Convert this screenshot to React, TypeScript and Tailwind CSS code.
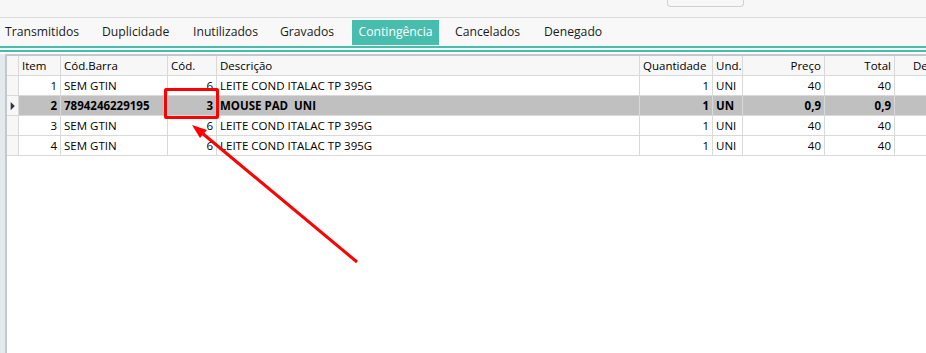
const tabs = [
    { label: 'Transmitidos', w: 'w-[97px]' },
    { label: 'Duplicidade', w: 'w-[91px]' },
    { label: 'Inutilizados', w: 'w-[87px]' },
    { label: 'Gravados', w: 'w-[72px]' },
    { label: 'Contingência', w: 'w-[87px]' },
    { label: 'Cancelados', w: 'w-[89px]' },
    { label: 'Denegado', w: 'w-[80px]' },
];

type Row = {
    item: string;
    barra: string;
    cod: string;
    desc: string;
    qtd: string;
    und: string;
    preco: string;
    total: string;
    selected?: boolean;
};

const rows: Row[] = [
    { item: '1', barra: 'SEM GTIN', cod: '6', desc: 'LEITE COND ITALAC TP 395G', qtd: '1', und: 'UNI', preco: '40', total: '40' },
    { item: '2', barra: '7894246229195', cod: '3', desc: 'MOUSE PAD  UNI', qtd: '1', und: 'UN', preco: '0,9', total: '0,9', selected: true },
    { item: '3', barra: 'SEM GTIN', cod: '6', desc: 'LEITE COND ITALAC TP 395G', qtd: '1', und: 'UNI', preco: '40', total: '40' },
    { item: '4', barra: 'SEM GTIN', cod: '6', desc: 'LEITE COND ITALAC TP 395G', qtd: '1', und: 'UNI', preco: '40', total: '40' },
];

const cols = 'grid grid-cols-[12px_42px_107px_49px_423px_73px_30px_82px_70px_80px]';
const cell = 'h-5 border-r border-b border-[#d9d9d9] px-[3px] leading-[19px] whitespace-pre overflow-hidden';

export default function App() {
    return (
        <div
            className="relative h-[353px] w-[926px] overflow-hidden bg-white text-[11.5px] text-black"
            style={{ fontFamily: '"Open Sans", "Noto Sans", sans-serif' }}
        >
            {/* top toolbar strip */}
            <div className="flex h-[18px] border-b border-[#dcdcdc] bg-[#f7f7f7]">
                <div className="ml-[667px] h-[7px] w-[77px] rounded-b-[4px] border border-t-0 border-[#d0d0d0]" />
            </div>

            {/* tabs */}
            <div className="flex h-[28px] items-center bg-[#f8f8f8] pl-[5px] pt-[1px] text-[12.2px] text-[#1b1b1b]">
                {tabs.map((t) =>
                    t.label === 'Contingência' ? (
                        <div key={t.label} className="mr-[16px] flex h-[25px] w-[87px] shrink-0 items-center justify-center bg-[#47bdae] text-white">
                            {t.label}
                        </div>
                    ) : (
                        <div key={t.label} className={`flex h-[25px] shrink-0 items-center ${t.w}`}>
                            {t.label}
                        </div>
                    ),
                )}
            </div>

            {/* teal double rule */}
            <div className="h-[2px] bg-[#47bdae]" />
            <div className="h-[2px] bg-[#f4f4f4]" />
            <div className="h-[2px] bg-[#47bdae]" />
            <div className="h-[2px] bg-white" />

            {/* grid */}
            <div className="flex h-full">
                <div className="w-[5px] shrink-0 bg-[#e4e9ee]" />
                <div className="min-w-0 flex-1 border-l-2 border-t-2 border-[#c4c8cc] bg-white">
                    <div className={`${cols} bg-[#f7f7f7]`}>
                        <div className={cell} />
                        <div className={cell}>Item</div>
                        <div className={cell}>Cód.Barra</div>
                        <div className={cell}>Cód.</div>
                        <div className={cell}>Descrição</div>
                        <div className={cell}>Quantidade</div>
                        <div className={cell}>Und.</div>
                        <div className={`${cell} text-right`}>Preço</div>
                        <div className={`${cell} text-right`}>Total</div>
                        <div className={`${cell} !pl-[18px]`}>Desconto</div>
                    </div>
                    {rows.map((r) => (
                        <div key={r.item} className={`${cols} ${r.selected ? 'bg-[#c0c0c0] font-bold' : 'bg-white'}`}>
                            <div className={`${cell} flex items-center bg-[#f7f7f7] !px-0`}>
                                {r.selected && (
                                    <svg width="12" height="20" viewBox="0 0 12 20">
                                        <path d="M4 5.5 L8.5 10 L4 14.5 Z" fill="#2c3646" />
                                    </svg>
                                )}
                            </div>
                            <div className={`${cell} text-right`}>{r.item}</div>
                            <div className={cell}>{r.barra}</div>
                            <div className={`${cell} text-right`}>{r.cod}</div>
                            <div className={cell}>{r.desc}</div>
                            <div className={`${cell} text-right`}>{r.qtd}</div>
                            <div className={cell}>{r.und}</div>
                            <div className={`${cell} text-right`}>{r.preco}</div>
                            <div className={`${cell} text-right`}>{r.total}</div>
                            <div className={cell} />
                        </div>
                    ))}
                </div>
            </div>

            {/* annotation: red box + arrow */}
            <div className="absolute left-[164px] top-[88px] h-[31px] w-[55px] rounded-[2px] border-[3px] border-[#ff0000]" />
            <svg className="pointer-events-none absolute inset-0" width="926" height="353">
                <line x1="357" y1="262" x2="202" y2="133" stroke="#ff0000" strokeWidth="3" />
                <polygon points="192,125 200,138 207,130" fill="#ff0000" />
            </svg>
        </div>
    );
}
